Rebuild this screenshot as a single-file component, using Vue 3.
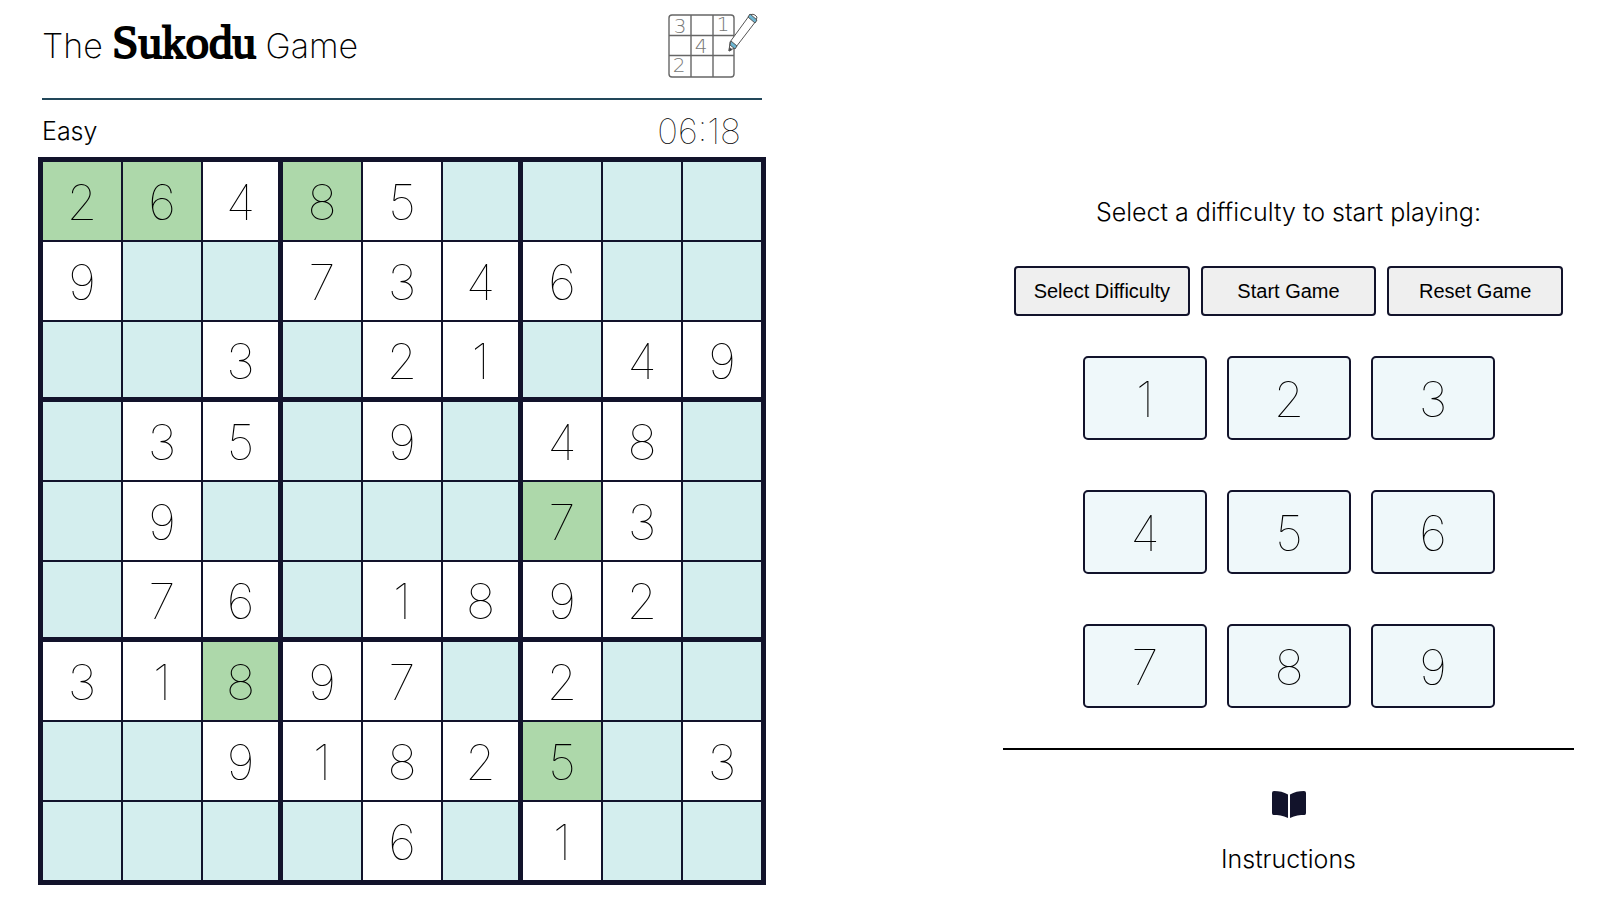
<script setup>
import { ref } from 'vue'

const puzzle = [
  '26485....',
  '9..7346..',
  '..3.21.49',
  '.35.9.48.',
  '.9....73.',
  '.76.1892.',
  '31897.2..',
  '..91825.3',
  '....6.1..',
]
const solved = new Set(['0-0', '0-1', '0-3', '4-6', '6-2', '7-6'])

const cells = puzzle.flatMap((line, row) =>
  [...line].map((char, col) => ({
    key: `${row}-${col}`,
    row,
    col,
    value: char === '.' ? '' : char,
    solved: solved.has(`${row}-${col}`),
  })),
)

const selected = ref('')
const actions = ['Select Difficulty', 'Start Game', 'Reset Game']

function cellClasses(cell) {
  return {
    empty: !cell.value,
    solved: cell.solved,
    'block-right': cell.col === 2 || cell.col === 5,
    'block-bottom': cell.row === 2 || cell.row === 5,
    'last-col': cell.col === 8,
    'last-row': cell.row === 8,
  }
}
</script>

<template>
  <main class="page">
    <section class="game">
      <header class="header">
        <h1 class="title">The <span class="brand">Sukodu</span> Game</h1>
        <svg class="logo" viewBox="0 0 92 68" aria-hidden="true">
          <g fill="none" stroke="#666" stroke-width="1.4">
            <rect x="1" y="3" width="65" height="62" rx="3" />
            <path d="M23 3v62M45 3v62M1 23.500h65M1 43.500h65" />
          </g>
          <g class="logo-digits">
            <text x="12" y="21">3</text>
            <text x="55" y="19">1</text>
            <text x="33" y="41">4</text>
            <text x="11" y="60">2</text>
          </g>
          <g stroke="#555" stroke-width="1" stroke-linejoin="round">
            <path fill="#fff" d="M62 30 L81 4 Q85 0 89 5 L88 9 L68 35 L61 39z" />
            <path fill="#6db6d2" d="M80 5l2-3 7 6-2 3zM63 29l-1 4 5 4 2-3z" />
            <path fill="#333" d="M61.500 35.500L61 39l3-1.500z" />
          </g>
        </svg>
      </header>
      <div class="status">
        <span class="level">Easy</span>
        <time class="timer">06:18</time>
      </div>
      <div class="board">
        <button
          v-for="cell in cells"
          :key="cell.key"
          type="button"
          class="cell"
          :class="cellClasses(cell)"
          :aria-label="`Row ${cell.row + 1}, column ${cell.col + 1}`"
        >{{ cell.value }}</button>
      </div>
    </section>

    <aside class="panel">
      <p class="prompt">Select a difficulty to start playing:</p>
      <div class="actions">
        <button v-for="label in actions" :key="label" type="button" class="action">{{ label }}</button>
      </div>
      <div class="keypad">
        <button v-for="n in 9" :key="n" type="button" class="key" @click="selected = String(n)">{{ n }}</button>
      </div>
      <a class="instructions" href="#instructions">
        <svg class="book" viewBox="0 0 34 27" aria-hidden="true">
          <path d="M2 0C7 0 12 1 16 3.500V27C11 24.500 6 24 1.500 24Q0 24 0 22V2Q0 0 2 0z" />
          <path d="M32 0C27 0 22 1 18 3.500V27C23 24.500 28 24 32.500 24Q34 24 34 22V2Q34 0 32 0z" />
        </svg>
        <span>Instructions</span>
      </a>
    </aside>
  </main>
</template>

<style>
body {
  margin: 0;
  background: #fff;
}
</style>

<style scoped>
.page {
  box-sizing: border-box;
  display: grid;
  grid-template-columns: 728fr 571fr;
  column-gap: 237px;
  padding: 0 26px 16px 38px;
  font-family: Inter, "Open Sans", sans-serif;
  font-weight: 300;
  color: #000;
}

.header {
  box-sizing: border-box;
  display: flex;
  justify-content: space-between;
  align-items: flex-start;
  height: 100px;
  margin: 0 4px;
  padding: 12px 2px 0 0;
  border-bottom: 2px solid #22475a;
}

.title {
  margin: 0;
  font-size: 34px;
  line-height: 68px;
  font-weight: 200;
}

.brand {
  font-family: "Liberation Serif", serif;
  font-size: 47px;
  line-height: 47px;
  -webkit-text-stroke: 2px #000;
}

.logo {
  width: 92px;
  height: 68px;
}

.logo-digits {
  font-family: "DejaVu Sans", sans-serif;
  font-weight: 200;
  font-size: 20px;
  text-anchor: middle;
  fill: #777;
}

.status {
  box-sizing: border-box;
  display: flex;
  justify-content: space-between;
  align-items: center;
  height: 57px;
  padding: 5px 25px 0 4px;
}

.level {
  font-size: 25px;
}

.timer {
  font-size: 35px;
  font-weight: 100;
}

.board {
  box-sizing: border-box;
  display: grid;
  grid-template-columns: repeat(8, 80fr) 78fr;
  grid-template-rows: repeat(8, 80fr) 78fr;
  aspect-ratio: 1;
  border: 5px solid #12132b;
}

.cell {
  min-width: 0;
  min-height: 0;
  margin: 0;
  padding: 3px 0 0;
  border: 0 solid #12132b;
  border-width: 0 2px 2px 0;
  background: #fff;
  font: 100 49px/1 Inter, "Open Sans", sans-serif;
  color: #000;
}

.empty {
  background: #d4eeee;
}

.solved {
  background: #add8aa;
}

.block-right {
  border-right-width: 5px;
}

.block-bottom {
  border-bottom-width: 5px;
}

.last-col {
  border-right-width: 0;
}

.last-row {
  border-bottom-width: 0;
}

.panel {
  display: flex;
  flex-direction: column;
  padding-top: 196px;
}

.prompt {
  margin: 0 0 38px;
  font-size: 25px;
  line-height: 32px;
  text-align: center;
}

.actions {
  display: grid;
  grid-template-columns: repeat(3, 1fr);
  gap: 11px;
  padding: 0 11px;
}

.action {
  height: 50px;
  padding: 0;
  border: 2px solid #12132b;
  border-radius: 4px;
  background: #efefef;
  font: 20px "Liberation Sans", Arial, sans-serif;
  color: #000;
}

.keypad {
  display: grid;
  grid-template-columns: repeat(3, 1fr);
  gap: 50px 20px;
  padding: 40px 79px 40px 80px;
  border-bottom: 2px solid #000;
}

.key {
  height: 84px;
  padding: 2px 0 0;
  border: 2px solid #12132b;
  border-radius: 5px;
  background: #eff8fa;
  font: 100 49px/1 Inter, "Open Sans", sans-serif;
  color: #000;
}

.instructions {
  display: flex;
  flex-direction: column;
  align-items: center;
  gap: 25px;
  padding-top: 41px;
  font-size: 25px;
  line-height: 32px;
  color: #000;
  text-decoration: none;
}

.book {
  width: 34px;
  height: 27px;
  fill: #12132b;
}
</style>
